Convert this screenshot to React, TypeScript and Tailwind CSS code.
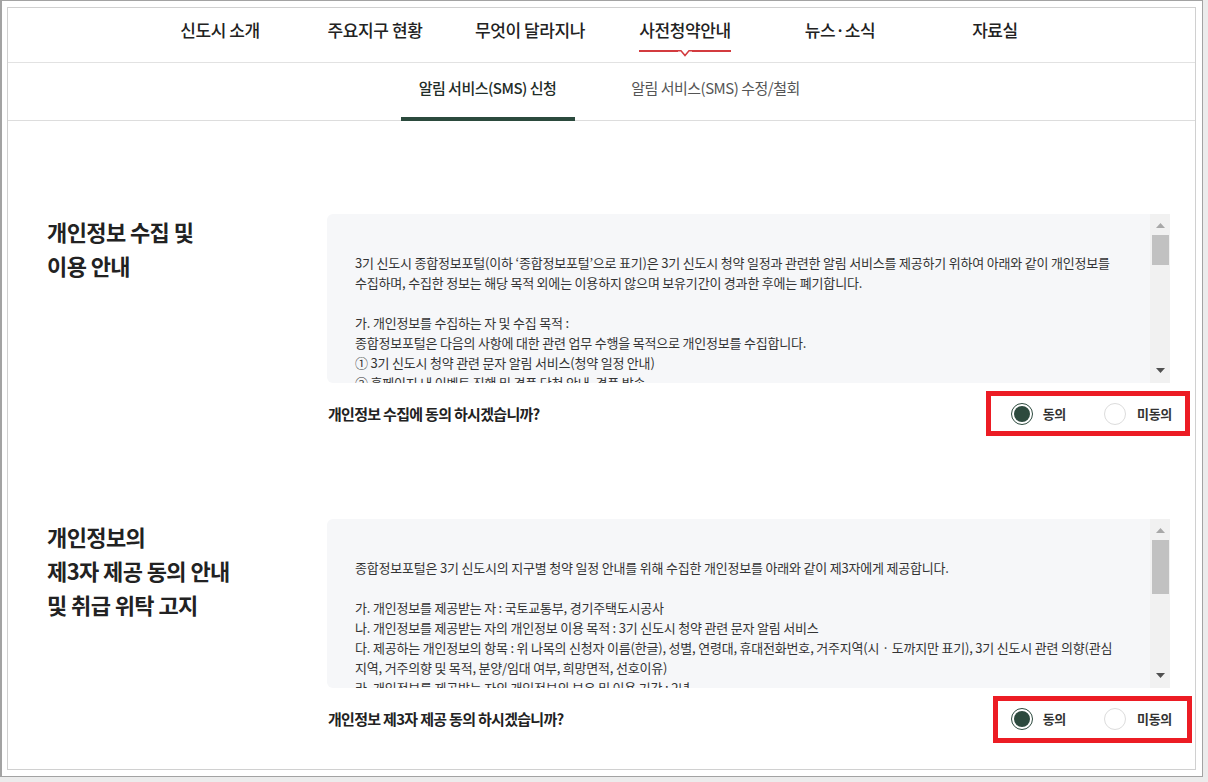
import React from 'react';

const navItems = ['신도시 소개', '주요지구 현황', '무엇이 달라지나', '사전청약안내', '뉴스·소식', '자료실'];

const collectLines = [
  '3기 신도시 종합정보포털(이하 ‘종합정보포털’으로 표기)은 3기 신도시 청약 일정과 관련한 알림 서비스를 제공하기 위하여 아래와 같이 개인정보를',
  '수집하며, 수집한 정보는 해당 목적 외에는 이용하지 않으며 보유기간이 경과한 후에는 폐기합니다.',
  '',
  '가. 개인정보를 수집하는 자 및 수집 목적 :',
  '종합정보포털은 다음의 사항에 대한 관련 업무 수행을 목적으로 개인정보를 수집합니다.',
  '① 3기 신도시 청약 관련 문자 알림 서비스(청약 일정 안내)',
  '② 홈페이지 내 이벤트 진행 및 경품 당첨 안내, 경품 발송',
  '',
  '나. 수집하는 개인정보의 항목 :',
];

const thirdPartyLines = [
  '종합정보포털은 3기 신도시의 지구별 청약 일정 안내를 위해 수집한 개인정보를 아래와 같이 제3자에게 제공합니다.',
  '',
  '가. 개인정보를 제공받는 자 : 국토교통부, 경기주택도시공사',
  '나. 개인정보를 제공받는 자의 개인정보 이용 목적 : 3기 신도시 청약 관련 문자 알림 서비스',
  '다. 제공하는 개인정보의 항목 : 위 나목의 신청자 이름(한글), 성별, 연령대, 휴대전화번호, 거주지역(시 · 도까지만 표기), 3기 신도시 관련 의향(관심',
  '지역, 거주의향 및 목적, 분양/임대 여부, 희망면적, 선호이유)',
  '라. 개인정보를 제공받는 자의 개인정보의 보유 및 이용 기간 : 2년',
];

type Mark = { right: number; top: number; w: number; h: number };

function ScrollBox({ lines, thumb }: { lines: string[]; thumb: number }) {
  return (
    <div className="flex h-[169px] w-[843px] overflow-hidden rounded-l-[6px] bg-[#f6f7f9]">
      <div className="flex-1 overflow-hidden pl-[28px] pt-[39px] text-[13px] leading-[20px] tracking-[-0.2px] text-[#333]">
        {lines.map((line, i) => (
          <p key={i} className="h-[20px] whitespace-nowrap">
            {line || '\u00a0'}
          </p>
        ))}
      </div>
      <div className="flex w-[20px] flex-col items-center bg-[#f1f1f1] pl-px">
        <svg width="9" height="5" viewBox="0 0 9 5" className="mt-[9px]">
          <path d="M0 5 L4.5 0 L9 5 Z" fill="#a8a8a8" />
        </svg>
        <div className="mt-[7px] w-[17px] bg-[#c1c1c1]" style={{ height: thumb }} />
        <div className="flex-1" />
        <svg width="9" height="5" viewBox="0 0 9 5" className="mb-[10px]">
          <path d="M0 0 L9 0 L4.5 5 Z" fill="#505050" />
        </svg>
      </div>
    </div>
  );
}

function Radios({ mark }: { mark: Mark }) {
  return (
    <div className="relative -mr-[2px] flex items-center text-[13px] font-bold tracking-[-0.3px] text-[#333]">
      <span className="flex h-[22px] w-[22px] items-center justify-center rounded-full border border-[#2d4a3e] bg-white">
        <span className="h-[16px] w-[16px] rounded-full bg-[#2d4a3e]" />
      </span>
      <span className="ml-[10px] leading-[22px]">동의</span>
      <span className="ml-[38px] h-[22px] w-[22px] rounded-full border border-[#dcdcdc] bg-white" />
      <span className="ml-[11px] leading-[22px]">미동의</span>
      <div
        className="pointer-events-none absolute border-[5px] border-[#ec1c24]"
        style={{ right: mark.right, top: mark.top, width: mark.w, height: mark.h }}
      />
    </div>
  );
}

function Section({
  title,
  lines,
  thumb,
  question,
  mark,
}: {
  title: string[];
  lines: string[];
  thumb: number;
  question: string;
  mark: Mark;
}) {
  return (
    <div className="flex">
      <div className="w-[319px] pl-[39px] text-[22px] font-bold leading-[34px] tracking-[-0.6px] text-[#222]">
        {title.map((t) => (
          <p key={t}>{t}</p>
        ))}
      </div>
      <div className="w-[843px]">
        <ScrollBox lines={lines} thumb={thumb} />
        <div className="flex h-[62px] items-center justify-between pl-px">
          <p className="text-[15px] font-bold tracking-[-0.7px] text-[#222]">{question}</p>
          <Radios mark={mark} />
        </div>
      </div>
    </div>
  );
}

export default function App() {
  return (
    <div className="h-[782px] w-[1208px] overflow-hidden bg-[#ececec] font-['Noto_Sans_CJK_KR','Noto_Sans',sans-serif]">
      <div className="h-[777px] w-[1203px] border border-l-2 border-[#a3a3a3] bg-white p-[6px] pl-[5px]">
        <div className="h-full overflow-hidden border border-[#d0d0d0]">
          <nav className="flex h-[55px] justify-center border-b border-[#e2e2e2] pl-[12px]">
            {navItems.map((item) => (
              <div key={item} className="flex w-[155px] justify-center pt-[10px]">
                <span className="relative text-[17px] font-medium leading-[24px] tracking-[-0.4px] text-[#222]">
                  {item}
                  {item === '사전청약안내' && (
                    <span className="absolute left-0 right-0 top-[31px] flex justify-center">
                      <span className="absolute left-0 right-0 top-[1px] h-[1.5px] bg-[#d33b3f]" />
                      <svg width="14" height="8" viewBox="0 0 14 8" className="relative">
                        <rect x="0" y="0" width="14" height="3" fill="#fff" />
                        <path d="M0 1.75 L3 1.75 L7 6.5 L11 1.75 L14 1.75" fill="none" stroke="#d33b3f" strokeWidth="1.5" />
                      </svg>
                    </span>
                  )}
                </span>
              </div>
            ))}
          </nav>

          <div className="flex h-[58px] justify-center gap-[54px] border-b border-[#dddddd]">
            <div className="relative w-[174px] whitespace-nowrap pt-[14px] text-center text-[15px] font-medium leading-[22px] tracking-[-0.5px] text-[#1f2d27]">
              알림 서비스(SMS) 신청
              <span className="absolute bottom-[-1px] left-0 right-0 h-[4px] bg-[#2b4a3d]" />
            </div>
            <div className="w-[174px] whitespace-nowrap pt-[14px] text-center text-[15px] leading-[22px] tracking-[-0.5px] text-[#555]">
              알림 서비스(SMS) 수정/철회
            </div>
          </div>

          <div className="pt-[93px]">
            <Section
              title={['개인정보 수집 및', '이용 안내']}
              lines={collectLines}
              thumb={30}
              question="개인정보 수집에 동의 하시겠습니까?"
              mark={{ right: -18, top: -12, w: 204, h: 45 }}
            />
            <div className="mt-[74px]">
              <Section
                title={['개인정보의', '제3자 제공 동의 안내', '및 취급 위탁 고지']}
                lines={thirdPartyLines}
                thumb={54}
                question="개인정보 제3자 제공 동의 하시겠습니까?"
                mark={{ right: -20, top: -12, w: 199, h: 47 }}
              />
            </div>
          </div>
        </div>
      </div>
    </div>
  );
}
